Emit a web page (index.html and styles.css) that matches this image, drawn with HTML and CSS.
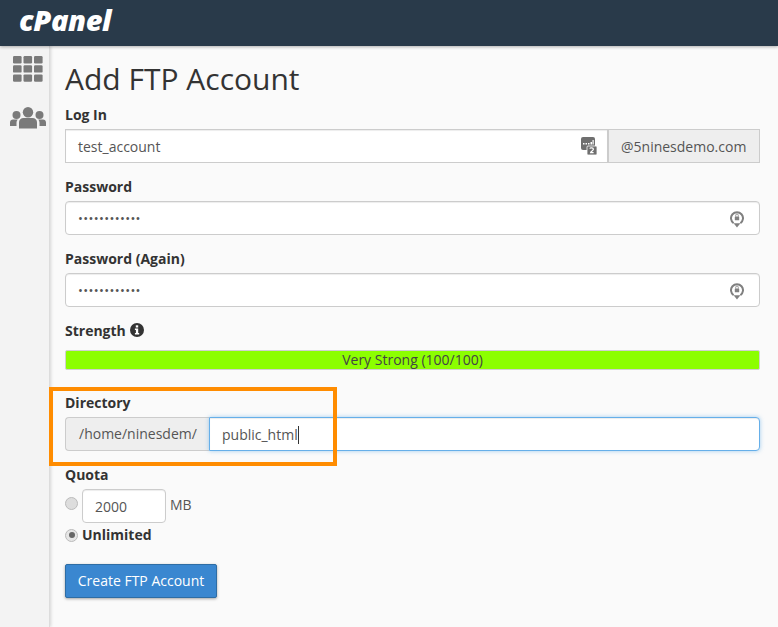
FILE: index.html
```html
<!DOCTYPE html>
<html lang="en">
<head>
<meta charset="utf-8">
<title>Add FTP Account</title>
<link rel="stylesheet" href="styles.css">
</head>
<body>
<header class="topbar"><span class="logo">cPanel</span></header>
<div class="shell">
  <nav class="sidebar">
    <svg class="nav-grid" viewBox="0 0 30 26" width="30" height="26" aria-hidden="true">
      <g fill="#7a7a7a">
        <rect x="0" y="0" width="8.6" height="7.4" rx="1.2"/><rect x="10.5" y="0" width="8.6" height="7.4" rx="1.2"/><rect x="21" y="0" width="8.6" height="7.4" rx="1.2"/>
        <rect x="0" y="9.2" width="8.6" height="7.4" rx="1.2"/><rect x="10.5" y="9.2" width="8.6" height="7.4" rx="1.2"/><rect x="21" y="9.2" width="8.6" height="7.4" rx="1.2"/>
        <rect x="0" y="18.4" width="8.6" height="7.4" rx="1.2"/><rect x="10.5" y="18.4" width="8.6" height="7.4" rx="1.2"/><rect x="21" y="18.4" width="8.6" height="7.4" rx="1.2"/>
      </g>
    </svg>
    <svg class="nav-users" viewBox="0 0 36 22" width="36" height="22" aria-hidden="true">
      <g fill="#7a7a7a">
        <circle cx="18" cy="5.2" r="5.2"/><circle cx="6.5" cy="8" r="4"/><circle cx="29.5" cy="8" r="4"/>
        <path d="M9 21.500v-6c0-3 2-4.600 4.500-4.600h9c2.500 0 4.500 1.600 4.500 4.600v6z"/>
        <path d="M0 19v-3.500c0-2 1.300-3 3-3h4.800c-.8 1-1.300 2-1.300 3.300V19z"/>
        <path d="M36 19v-3.500c0-2-1.300-3-3-3h-4.800c.8 1 1.300 2 1.300 3.300V19z"/>
      </g>
    </svg>
  </nav>
  <main class="content">
    <h1>Add FTP Account</h1>
    <div class="field">
      <label>Log In</label>
      <div class="group">
        <div class="input has-icon">test_account
          <svg class="icon-pos" viewBox="0 0 16 18" width="16" height="18" aria-hidden="true">
            <rect x="0" y="0" width="14" height="13" rx="2" fill="#6f6f6f"/>
            <g fill="#fff"><rect x="2" y="6" width="1.500" height="1.500"/><rect x="4.500" y="6" width="1.500" height="1.500"/><rect x="7" y="6" width="1.500" height="1.500"/><rect x="9.500" y="5" width="1.500" height="2.500"/><rect x="11.500" y="3" width="1.200" height="4.500"/></g>
            <rect x="6" y="9" width="10" height="9" rx="1" fill="#6f6f6f" stroke="#fff" stroke-width=".8"/>
            <path d="M8.800 11.600c.4-1.100 3.600-1.100 3.600.6 0 1.300-2.500 2-2.800 3.400h3" fill="none" stroke="#fff" stroke-width="1.200"/>
          </svg>
        </div>
        <span class="addon addon-right">@5ninesdemo.com</span>
      </div>
    </div>
    <div class="field">
      <label>Password</label>
      <div class="input rounded has-icon dots">••••••••••••
        <svg class="icon-pw" viewBox="0 0 14 18" width="14" height="18" aria-hidden="true">
          <path d="M3.600 13.200A6 6 0 1 1 10.400 13.200" fill="none" stroke="#808080" stroke-width="2"/>
          <path d="M7 17.500l-3.400-4.300h6.800z" fill="#808080"/>
          <rect x="4.800" y="6.400" width="4.400" height="3.800" rx=".5" fill="#808080"/>
          <path d="M5.700 6.600V5.300a1.300 1.300 0 0 1 2.600 0v1.300" fill="none" stroke="#808080" stroke-width=".8"/>
        </svg>
      </div>
    </div>
    <div class="field">
      <label>Password (Again)</label>
      <div class="input rounded has-icon dots">••••••••••••
        <svg class="icon-pw" viewBox="0 0 14 18" width="14" height="18" aria-hidden="true">
          <path d="M3.600 13.200A6 6 0 1 1 10.400 13.200" fill="none" stroke="#808080" stroke-width="2"/>
          <path d="M7 17.500l-3.400-4.300h6.800z" fill="#808080"/>
          <rect x="4.800" y="6.400" width="4.400" height="3.800" rx=".5" fill="#808080"/>
          <path d="M5.700 6.600V5.300a1.300 1.300 0 0 1 2.600 0v1.300" fill="none" stroke="#808080" stroke-width=".8"/>
        </svg>
      </div>
    </div>
    <div class="field field-strength">
      <label class="label-strength">Strength
        <svg viewBox="0 0 14 14" width="14" height="14" aria-hidden="true">
          <circle cx="7" cy="7" r="7" fill="#333"/>
          <rect x="5.800" y="2.300" width="2.400" height="2.200" fill="#fff"/>
          <path d="M4.900 5.600h3.300v4.500h1v1.300H4.900v-1.300h1V6.900h-1z" fill="#fff"/>
        </svg>
      </label>
      <div class="meter">Very Strong (100/100)</div>
    </div>
    <div class="field field-dir">
      <label>Directory</label>
      <div class="group">
        <span class="addon addon-left">/home/ninesdem/</span>
        <div class="input focused">public_html<span class="caret"></span></div>
      </div>
    </div>
    <div class="field field-quota">
      <label>Quota</label>
      <div class="quota-row">
        <span class="radio"></span>
        <div class="input rounded quota-input">2000</div>
        <span class="unit">MB</span>
      </div>
      <div class="unlimited-row">
        <span class="radio checked"></span>
        <strong>Unlimited</strong>
      </div>
    </div>
    <button class="btn" type="button">Create FTP Account</button>
  </main>
</div>
<div class="highlight"></div>
</body>
</html>
```
FILE: styles.css
```css
* { box-sizing: border-box; }
html, body { margin: 0; height: 100%; }
body {
  width: 778px;
  height: 627px;
  overflow: hidden;
  background: #fafafa;
  color: #333;
  font-family: "Open Sans", "Liberation Sans", sans-serif;
  font-size: 14px;
  line-height: 20px;
  position: relative;
}
.topbar {
  height: 46px;
  background: #293a4a;
  padding: 0 19px;
  display: flex;
  align-items: center;
  box-shadow: 0 1px 3px rgba(0,0,0,.3);
  position: relative;
  z-index: 2;
}
.logo {
  color: #fff;
  font-weight: 800;
  font-style: italic;
  font-size: 29px;
  line-height: 40px;
  letter-spacing: -.4px;
  position: relative;
  top: -3px;
}
.shell { display: flex; height: 581px; }
.sidebar {
  width: 50px;
  flex: none;
  background: #f3f3f3;
  border-right: 1px solid #dcdcdc;
  box-shadow: 1px 0 3px rgba(0,0,0,.15);
  display: flex;
  flex-direction: column;
  align-items: center;
  padding-top: 10px;
}
.nav-grid { display: block; margin-left: 7px; }
.nav-users { display: block; margin-top: 25px; margin-left: 6px; }
.content { flex: 1; padding: 0 18px 0 15px; min-width: 0; }
h1 {
  margin: 15px 0 8px;
  font-size: 30px;
  font-weight: 400;
  line-height: 36px;
  color: #333;
}
label { display: block; font-weight: 700; margin-bottom: 4px; height: 20px; }
.field { margin-bottom: 14px; }
.group { display: flex; height: 34px; }
.input {
  flex: 1;
  height: 34px;
  background: #fff;
  border: 1px solid #ccc;
  padding: 0 12px;
  line-height: 33px;
  color: #555;
  position: relative;
  box-shadow: inset 0 1px 1px rgba(0,0,0,.075);
}
.rounded { border-radius: 4px; }
.dots { font-size: 13px; letter-spacing: .35px; line-height: 32px; }
.has-icon svg { position: absolute; top: 7px; }
.icon-pos { right: 10px; }
.has-icon .icon-pw { right: 15px; top: 8px; }
.addon {
  height: 34px;
  background: #eee;
  border: 1px solid #ccc;
  padding: 0 12px;
  line-height: 33px;
  color: #555;
  white-space: nowrap;
}
.addon-right { width: 152px; }
.addon-left { border-right: 0; border-radius: 4px 0 0 4px; width: 144px; padding-left: 13px; line-height: 32px; }
.focused {
  border-color: #66afe9;
  border-radius: 0 4px 4px 0;
  box-shadow: inset 0 1px 1px rgba(0,0,0,.075), 0 0 4px rgba(102,175,233,.6);
}
.caret {
  display: inline-block;
  width: 1px;
  height: 18px;
  background: #333;
  vertical-align: -4px;
}
.field-strength { margin-bottom: 23px; }
.label-strength { margin-bottom: 9px; display: flex; align-items: center; gap: 4px; }
.label-strength svg { display: block; position: relative; top: -1px; }
.meter {
  height: 20px;
  background: #8cff00;
  border: 1px solid #d0d0d0;
  border-radius: 2px;
  text-align: center;
  line-height: 18px;
  color: #444;
}
.field-quota { margin-bottom: 19px; }
.quota-row { display: flex; align-items: flex-start; height: 34px; }
.radio {
  width: 13px;
  height: 13px;
  border-radius: 50%;
  background: #ddd;
  border: 1px solid #bbb;
  flex: none;
  margin-top: 8px;
  position: relative;
}
.radio.checked { margin-top: 0; background: #e6e6e6; }
.radio.checked::after {
  content: "";
  position: absolute;
  left: 2.500px;
  top: 2.500px;
  width: 6px;
  height: 6px;
  border-radius: 50%;
  background: #666;
}
.quota-input { flex: none; width: 84px; margin-left: 4px; padding: 0 12px; }
.unit { margin-left: 4px; line-height: 32px; color: #555; }
.unlimited-row { display: flex; align-items: center; gap: 4px; height: 20px; margin-top: 2px; }
.btn {
  display: block;
  width: 152px;
  height: 34px;
  padding: 0;
  background: #3a87d0;
  border: 1px solid #2e6da4;
  border-radius: 2px;
  color: #fff;
  font: inherit;
  box-shadow: 0 1px 3px rgba(0,0,0,.35);
}
.highlight {
  position: absolute;
  left: 49px;
  top: 387px;
  width: 288px;
  height: 79px;
  border: 4px solid #ff8c00;
  pointer-events: none;
}
```
